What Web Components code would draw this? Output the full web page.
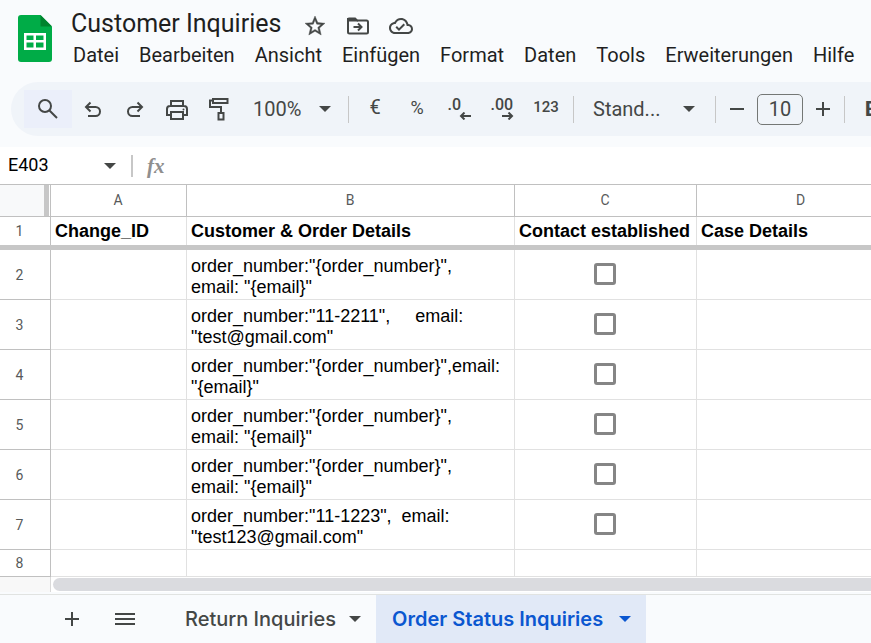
<!DOCTYPE html>
<html lang="de">
<head>
<meta charset="utf-8">
<title>Customer Inquiries</title>
<style>
html, body { height: 100%; }
body { margin: 0; background: #f9fbfd; font-family: Roboto, "Liberation Sans", sans-serif; color: #1f1f1f; overflow: hidden; }
</style>
</head>
<body>
<sheets-app></sheets-app>
<script>
const RESET = `
  *, *::before, *::after { box-sizing: border-box; }
  button, input, select { font: inherit; color: inherit; margin: 0; padding: 0; border: 0; background: none; border-radius: 0; outline: 0; }
  button { display: flex; align-items: center; justify-content: center; cursor: pointer; white-space: nowrap; }
  select { appearance: none; }
`;

const ICONS = {
  logo: [34, 47, `<path fill="#00ac47" d="M3 0H22.500L34 11.500V44Q34 47 31 47H3Q0 47 0 44V3Q0 0 3 0Z"/><path fill="#00832d" d="M22.500 0L34 11.500H22.500Z"/><path fill="#fff" fill-rule="evenodd" d="M6 18H28V35H6ZM8.500 20.500V25H15.500V20.500ZM18 20.500V25H25.500V20.500ZM8.500 27.500V32.500H15.500V27.500ZM18 27.500V32.500H25.500V27.500Z"/>`],
  star: [24, 24, `<path fill="currentColor" stroke="currentColor" stroke-width=".4" d="M22 9.240l-7.190-.620L12 2 9.190 8.630 2 9.240l5.460 4.730L5.820 21 12 17.270 18.180 21l-1.630-7.030L22 9.240zM12 15.400l-3.760 2.270 1-4.280-3.320-2.880 4.380-.380L12 6.100l1.710 4.040 4.380.380-3.320 2.880 1 4.280L12 15.400z"/>`],
  move: [24, 24, `<path fill="none" stroke="currentColor" stroke-width="2" d="M2 5H9L11.500 6.500H20.500Q22 6.500 22 8V18Q22 19.500 20.500 19.500H3.500Q2 19.500 2 18Z"/><path fill="currentColor" d="M1 5.500Q1 3.500 3 3.500H9.500L12 6.500V7.500H1Z"/><path fill="none" stroke="currentColor" stroke-width="2" d="M7.500 13H15M12 9.500L15.500 13L12 16.500"/>`],
  cloud: [24, 24, `<path fill="currentColor" d="M19.350 10.040C18.670 6.590 15.640 4 12 4 9.110 4 6.600 5.640 5.350 8.040 2.340 8.360 0 10.910 0 14c0 3.310 2.690 6 6 6h13c2.760 0 5-2.240 5-5 0-2.640-2.050-4.780-4.650-4.960zM19 18H6c-2.210 0-4-1.790-4-4 0-2.050 1.530-3.760 3.560-3.970l1.070-.110.500-.950C8.080 7.140 9.940 6 12 6c2.620 0 4.880 1.860 5.390 4.430l.300 1.500 1.530.110c1.560.100 2.780 1.410 2.780 2.960 0 1.650-1.350 3-3 3zm-9-3.820l-2.090-2.090L6.500 13.500 10 17l6.010-6.010-1.410-1.410z"/>`],
  search: [24, 24, `<g fill="none" stroke="currentColor" stroke-width="2"><circle cx="9" cy="9" r="6"/><path d="M13.200 13.200L21 21"/></g>`],
  undo: [24, 24, `<path fill="none" stroke="currentColor" stroke-width="2" d="M7 19H14.500A4.500 4.500 0 0 0 14.500 10H5.500M9.500 5.500L5 10L9.500 14.500"/>`],
  redo: [24, 24, `<path fill="none" stroke="currentColor" stroke-width="2" d="M17 19H9.500A4.500 4.500 0 0 1 9.500 10H18.500M14.500 5.500L19 10L14.500 14.500"/>`],
  print: [24, 24, `<g fill="none" stroke="currentColor" stroke-width="2"><path d="M6 9V4H18V9M6 18H2V12Q2 9 5 9H19Q22 9 22 12V18H18"/><path d="M6 15H18V22H6Z"/></g><circle cx="18.500" cy="12.500" r="1" fill="currentColor"/>`],
  paint: [24, 24, `<g fill="none" stroke="currentColor" stroke-width="2"><path d="M6 2H20.500V6H6Z"/><path d="M6 3.500H3V10H14V16"/><path d="M11.500 16H16.500V22.500H11.500Z"/></g>`],
  minus: [24, 24, `<path stroke="currentColor" stroke-width="2" d="M5 12H19"/>`],
  plus: [24, 24, `<path stroke="currentColor" stroke-width="2" d="M5 12H19M12 5V19"/>`],
  menu: [24, 24, `<path stroke="currentColor" stroke-width="2" d="M2 7H22M2 12H22M2 17H22"/>`],
  caret: [12, 6, `<path fill="currentColor" d="M0 0H12L6 6Z"/>`],
  left: [12, 8, `<path fill="none" stroke="currentColor" stroke-width="2" d="M12 4H2M5.500 .500L2 4L5.500 7.500"/>`],
  right: [12, 8, `<path fill="none" stroke="currentColor" stroke-width="2" d="M0 4H10M6.500 .500L10 4L6.500 7.500"/>`]
};

class UiIcon extends HTMLElement {
  connectedCallback() {
    const [w, h, body] = ICONS[this.getAttribute('name')];
    this.attachShadow({ mode: 'open' }).innerHTML =
      `<style>:host{display:inline-flex;flex:none}svg{display:block}</style><svg width="${w}" height="${h}" viewBox="0 0 ${w} ${h}" aria-hidden="true">${body}</svg>`;
  }
}
customElements.define('ui-icon', UiIcon);

class DocHeader extends HTMLElement {
  connectedCallback() {
    const menus = ['Datei', 'Bearbeiten', 'Ansicht', 'Einfügen', 'Format', 'Daten', 'Tools', 'Erweiterungen', 'Hilfe'];
    this.attachShadow({ mode: 'open' }).innerHTML = `<style>${RESET}
      :host { display: grid; grid-template-columns: auto 1fr; column-gap: 10px; padding: 8px 0 10px 18px; }
      .logo { align-self: start; padding-top: 7px; }
      .title { display: flex; align-items: center; height: 32px; padding-left: 9px; color: #444746; }
      h1 { margin: 0 22px 0 0; font-size: 25px; line-height: 32px; font-weight: 400; color: #1f1f1f; }
      .title button { width: 24px; height: 32px; margin-right: 19px; padding-top: 4px; }
      nav { display: flex; height: 32px; padding-left: 1px; }
      nav button { padding: 0 10px 2px; font-size: 20px; line-height: 24px; flex: none; }
    </style>
    <ui-icon class="logo" name="logo"></ui-icon>
    <div>
      <div class="title"><h1>Customer Inquiries</h1>
        <button aria-label="Markieren"><ui-icon name="star"></ui-icon></button>
        <button aria-label="Verschieben"><ui-icon name="move"></ui-icon></button>
        <button aria-label="Dokumentstatus"><ui-icon name="cloud"></ui-icon></button>
      </div>
      <nav>${menus.map(m => `<button>${m}</button>`).join('')}</nav>
    </div>`;
  }
}
customElements.define('doc-header', DocHeader);

class ToolSelect extends HTMLElement {
  connectedCallback() {
    this.attachShadow({ mode: 'open' }).innerHTML = `<style>${RESET}
      :host { display: grid; grid-template-columns: 1fr auto; align-items: center; font-size: 20px; height: 36px; }
      select { grid-area: 1 / 1 / 2 / 3; height: 36px; width: 100%; line-height: 24px; }
      ui-icon { grid-area: 1 / 2; pointer-events: none; }
    </style>
    <select aria-label="${this.getAttribute('label')}"><option>${this.getAttribute('value')}</option></select><ui-icon name="caret"></ui-icon>`;
  }
}
customElements.define('tool-select', ToolSelect);

class ToolBar extends HTMLElement {
  connectedCallback() {
    this.attachShadow({ mode: 'open' }).innerHTML = `<style>${RESET}
      :host { display: flex; align-items: center; height: 54px; margin: 0 0 11px 11px; padding-left: 13px; background: #f0f4f9; border-radius: 27px 0 0 27px; color: #444746; overflow: hidden; font-size: 16px; }
      button { flex: none; width: 42px; height: 36px; }
      .search { width: 48px; height: 38px; background: #ebeffa; }
      .zoom { flex: none; width: 78px; margin: 0 17px 0 13px; }
      .font { flex: none; width: 102px; margin: 0 20px 0 19px; }
      i { flex: none; width: 1px; height: 27px; background: #c7c7c7; }
      .format { display: flex; padding: 0 5px; font-weight: 500; }
      .format button { padding-bottom: 4px; }
      .format .wide { width: 44px; }
      .format .sign { font-size: 20px; font-weight: 400; }
      .format .percent { font-size: 18px; }
      .dec { display: grid; width: 23px; justify-items: start; grid-template-rows: 14px 8px; padding-top: 4px; line-height: 14px; }
      .dec ui-icon { justify-self: end; }
      .num { font-size: 15px; }
      .size { display: flex; align-items: center; gap: 5px; padding: 0 6px; }
      .size button { width: 30px; }
      .size input { width: 46px; height: 31px; border: 1px solid #747775; border-radius: 5px; text-align: center; font-size: 20px; }
      .bold { width: auto; padding-left: 20px; font-size: 20px; font-weight: 800; }
    </style>
    <button class="search" aria-label="Menüs durchsuchen"><ui-icon name="search"></ui-icon></button>
    <button aria-label="Rückgängig"><ui-icon name="undo"></ui-icon></button>
    <button aria-label="Wiederholen"><ui-icon name="redo"></ui-icon></button>
    <button aria-label="Drucken"><ui-icon name="print"></ui-icon></button>
    <button aria-label="Format übertragen"><ui-icon name="paint"></ui-icon></button>
    <tool-select class="zoom" label="Zoom" value="100%"></tool-select><i></i>
    <div class="format">
      <button class="sign">€</button>
      <button class="sign percent">%</button>
      <button aria-label="Dezimalstelle entfernen"><span class="dec">.0<ui-icon name="left"></ui-icon></span></button>
      <button class="wide" aria-label="Dezimalstelle hinzufügen"><span class="dec">.00<ui-icon name="right"></ui-icon></span></button>
      <button class="wide num">123</button>
    </div><i></i>
    <tool-select class="font" label="Schriftart" value="Stand..."></tool-select><i></i>
    <div class="size">
      <button aria-label="Schrift verkleinern"><ui-icon name="minus"></ui-icon></button>
      <input aria-label="Schriftgröße" value="10">
      <button aria-label="Schrift vergrößern"><ui-icon name="plus"></ui-icon></button>
    </div><i></i>
    <button class="bold" aria-label="Fett">B</button>`;
  }
}
customElements.define('tool-bar', ToolBar);

class FormulaBar extends HTMLElement {
  connectedCallback() {
    this.attachShadow({ mode: 'open' }).innerHTML = `<style>${RESET}
      :host { display: flex; align-items: center; height: 37px; padding-left: 8px; background: #fff; }
      .name { width: 90px; height: 30px; padding-bottom: 2px; font-size: 18px; color: #000; }
      .open { width: 24px; height: 30px; color: #444746; }
      i { width: 2px; height: 22px; margin: 0 14px 0 9px; background: #c7c7c7; }
      label { font: italic bold 21px/24px "Liberation Serif", serif; color: #8f8f8f; }
      .formula { flex: 1; min-width: 0; height: 30px; margin-left: 12px; font-size: 18px; }
    </style>
    <input class="name" aria-label="Namensfeld" value="E403">
    <button class="open" aria-label="Namensfeld öffnen"><ui-icon name="caret"></ui-icon></button><i></i>
    <label for="f">fx</label><input class="formula" id="f">`;
  }
}
customElements.define('formula-bar', FormulaBar);

class SheetGrid extends HTMLElement {
  connectedCallback() {
    const rows = [
      'order_number:"{order_number}",\nemail: "{email}"',
      'order_number:"11-2211",     email:\n"test@gmail.com"',
      'order_number:"{order_number}",email:\n"{email}"',
      'order_number:"{order_number}",\nemail: "{email}"',
      'order_number:"{order_number}",\nemail: "{email}"',
      'order_number:"11-1223",  email:\n"test123@gmail.com"'
    ];
    this.attachShadow({ mode: 'open' }).innerHTML = `<style>${RESET}
      :host { display: block; overflow: hidden; background: #fff; border-top: 1px solid #c0c0c0; }
      table { border-collapse: separate; border-spacing: 0; table-layout: fixed; width: 100%; min-width: 1001px; font: 18px/21px "Liberation Sans", Arial, sans-serif; color: #000; }
      .n { width: 51px; } .a { width: 136px; } .b { width: 328px; } .c { width: 182px; } .d { width: 209px; }
      th, td { padding: 0 0 0 4px; border-right: 1px solid #e1e1e1; border-bottom: 1px solid #e1e1e1; text-align: left; vertical-align: bottom; white-space: pre; }
      thead th, tbody th { padding: 0 1px 1px 0; text-align: center; vertical-align: middle; font: 14px/20px Roboto, sans-serif; color: #575a5a; border-color: #c0c0c0; }
      tbody th { padding: 0 11px 0 0; }
      thead th { height: 32px; }
      thead .corner { background: #f8f9fa; box-shadow: inset -1px 0 #fff, inset -6px 0 #c7c7c7; }
      .head > * { height: 28px; border-bottom: 0; }
      .head td { font-weight: 700; vertical-align: middle; }
      .freeze td { height: 5px; padding: 0; border: 0; background: #c7c7c7; }
      .data > * { height: 50px; }
      .data td { padding-bottom: 1px; }
      .data .check { padding: 0 1px 1px 0; vertical-align: middle; }
      .last > * { height: 27px; }
      input { display: block; appearance: none; width: 22px; height: 22px; margin: 0 auto; border: 3px solid #858585; border-radius: 3px; }
      input:checked { background: #858585; }
    </style>
    <table>
      <colgroup><col class="n"><col class="a"><col class="b"><col class="c"><col class="d"><col></colgroup>
      <thead><tr><th class="corner"></th><th>A</th><th>B</th><th>C</th><th>D</th><th></th></tr></thead>
      <tbody>
        <tr class="head"><th>1</th><td>Change_ID</td><td>Customer &amp; Order Details</td><td>Contact established</td><td>Case Details</td><td></td></tr>
        <tr class="freeze" aria-hidden="true"><td colspan="6"></td></tr>
        ${rows.map((r, i) => `<tr class="data"><th>${i + 2}</th><td></td><td>${r}</td><td class="check"><input type="checkbox" aria-label="Contact established, Zeile ${i + 2}"></td><td></td><td></td></tr>`).join('')}
        <tr class="last"><th>8</th><td></td><td></td><td></td><td></td><td></td></tr>
      </tbody>
    </table>`;
  }
}
customElements.define('sheet-grid', SheetGrid);

class ScrollTrack extends HTMLElement {
  connectedCallback() {
    this.attachShadow({ mode: 'open' }).innerHTML = `<style>
      :host { display: grid; grid-template-columns: 51px 1fr; height: 15px; background: #fff; }
      .corner { background: #f8f8f8; border-right: 1px solid #d9d9d9; }
      .thumb { height: 13px; margin: 1px 0 0 2px; border-radius: 7px 0 0 7px; background: #dadbdf; }
    </style><div class="corner"></div><div class="thumb"></div>`;
  }
}
customElements.define('scroll-track', ScrollTrack);

class SheetTab extends HTMLElement {
  connectedCallback() {
    this.attachShadow({ mode: 'open' }).innerHTML = `<style>${RESET}
      :host { display: flex; color: #444746; font: 500 20px/24px Inter, sans-serif; }
      :host([active]) { background: #e1e9f7; color: #0b57d0; font-weight: 600; }
      button { gap: 13px; padding: 0 15px 0 16px; height: 100%; }
      :host([active]) button { gap: 16px; }
    </style><button role="tab" aria-selected="${this.hasAttribute('active')}"><slot></slot><ui-icon name="caret"></ui-icon></button>`;
  }
}
customElements.define('sheet-tab', SheetTab);

class SheetTabs extends HTMLElement {
  connectedCallback() {
    this.attachShadow({ mode: 'open' }).innerHTML = `<style>${RESET}
      :host { display: flex; min-height: 48px; padding-left: 56px; border-top: 1px solid #e1e3e1; color: #444746; background: #f9fbfd; }
      .tool { width: 32px; margin-right: 21px; }
      .tool + .tool { margin-right: 28px; }
      .tabs { display: flex; }
    </style>
    <button class="tool" aria-label="Tabellenblatt hinzufügen"><ui-icon name="plus"></ui-icon></button>
    <button class="tool" aria-label="Alle Tabellenblätter"><ui-icon name="menu"></ui-icon></button>
    <div class="tabs" role="tablist"><slot></slot></div>`;
  }
}
customElements.define('sheet-tabs', SheetTabs);

class SheetsApp extends HTMLElement {
  connectedCallback() {
    this.attachShadow({ mode: 'open' }).innerHTML = `<style>
      :host { display: flex; flex-direction: column; min-height: 100vh; }
      sheet-tabs { flex: 1; margin-top: 2px; }
    </style>
    <doc-header></doc-header>
    <tool-bar></tool-bar>
    <formula-bar></formula-bar>
    <sheet-grid></sheet-grid>
    <scroll-track></scroll-track>
    <sheet-tabs><sheet-tab>Return Inquiries</sheet-tab><sheet-tab active>Order Status Inquiries</sheet-tab></sheet-tabs>`;
  }
}
customElements.define('sheets-app', SheetsApp);
</script>
</body>
</html>
